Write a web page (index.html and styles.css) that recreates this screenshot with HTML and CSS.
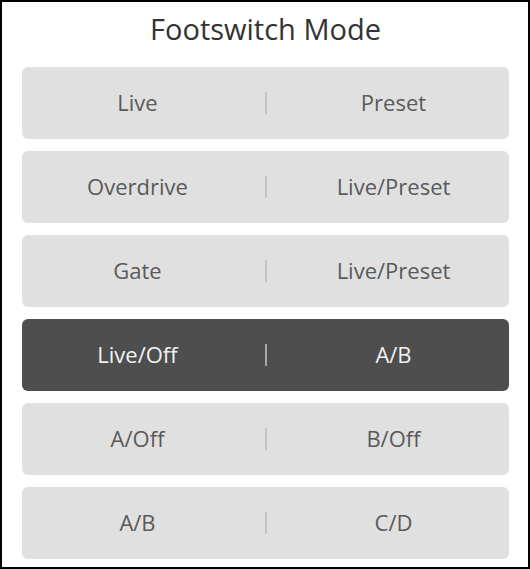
FILE: index.html
```html
<!DOCTYPE html>
<html>
<head>
<meta charset="utf-8">
<link rel="stylesheet" href="styles.css">
</head>
<body>
<div class="panel">
  <h1 class="title">Footswitch Mode</h1>
  <div class="list">
    <div class="opt"><span class="cell">Live</span><span class="sep"><i></i></span><span class="cell">Preset</span></div>
    <div class="opt"><span class="cell">Overdrive</span><span class="sep"><i></i></span><span class="cell">Live/Preset</span></div>
    <div class="opt"><span class="cell">Gate</span><span class="sep"><i></i></span><span class="cell">Live/Preset</span></div>
    <div class="opt active"><span class="cell">Live/Off</span><span class="sep"><i></i></span><span class="cell">A/B</span></div>
    <div class="opt"><span class="cell">A/Off</span><span class="sep"><i></i></span><span class="cell">B/Off</span></div>
    <div class="opt"><span class="cell">A/B</span><span class="sep"><i></i></span><span class="cell">C/D</span></div>
  </div>
</div>
</body>
</html>
```
FILE: styles.css
```css
html, body {
  margin: 0;
  padding: 0;
  background: #fff;
}
.panel {
  box-sizing: border-box;
  width: 530px;
  height: 569px;
  border: 2px solid #000;
  padding: 0 19px 0 20px;
  font-family: "Open Sans", "Noto Sans", sans-serif;
}
.title {
  margin: 0;
  height: 65px;
  line-height: 54px;
  text-align: center;
  font-size: 29px;
  font-weight: 400;
  color: #333;
}
.list {
  display: flex;
  flex-direction: column;
  gap: 12px;
}
.opt {
  display: flex;
  align-items: center;
  height: 72px;
  border-radius: 6px;
  background: #e0e0e0;
  color: #5a5a5a;
  font-size: 22px;
  font-weight: 400;
  line-height: 30px;
  padding-bottom: 3px;
  box-sizing: border-box;
}
.cell {
  flex: 1;
  text-align: center;
}
.sep {
  width: 25px;
  display: flex;
  justify-content: center;
}
.sep i {
  display: block;
  width: 2px;
  height: 22px;
  margin-top: 3px;
  background: #c4c4c4;
}
.opt.active {
  background: #4e4e4e;
  color: #f2f2f2;
}
.opt.active .sep i {
  background: #a8a8a8;
}
```
